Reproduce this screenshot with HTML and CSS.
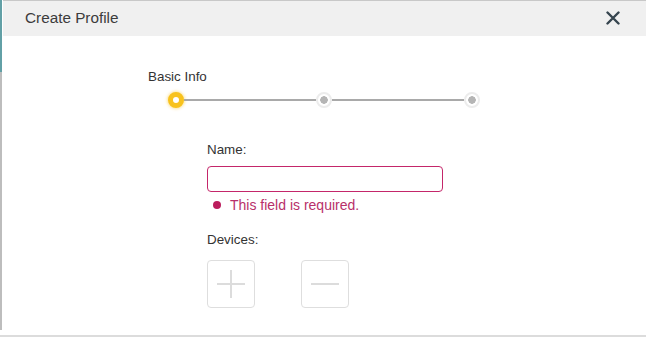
FILE: index.html
```html
<!DOCTYPE html>
<html>
<head>
<meta charset="utf-8">
<link rel="stylesheet" href="styles.css">
</head>
<body>
<div class="page">
  <div class="row">
    <div class="side"></div>
    <div class="modal">
      <div class="header">
        <span class="title">Create Profile</span>
        <svg class="close" width="14" height="14" viewBox="0 0 14 14"><path d="M1.5 1.5 L12.5 12.5 M12.5 1.5 L1.5 12.5" stroke="#36454f" stroke-width="2.4" stroke-linecap="round"/></svg>
      </div>
      <div class="body">
        <div class="step-label">Basic Info</div>
        <div class="stepper">
          <span class="dot active"></span>
          <span class="line"></span>
          <span class="dot"></span>
          <span class="line"></span>
          <span class="dot"></span>
        </div>
        <div class="form">
          <div class="label">Name:</div>
          <input class="input" type="text">
          <div class="error"><span class="err-dot"></span>This field is required.</div>
          <div class="label devices">Devices:</div>
          <div class="buttons">
            <div class="btn">
              <svg width="30" height="30" viewBox="0 0 30 30"><path d="M15 1 V29 M1 15 H29" stroke="#dcdcdc" stroke-width="2"/></svg>
            </div>
            <div class="btn">
              <svg width="30" height="30" viewBox="0 0 30 30"><path d="M1 15 H29" stroke="#dcdcdc" stroke-width="2"/></svg>
            </div>
          </div>
        </div>
      </div>
    </div>
  </div>
  <div class="bottom-line"></div>
</div>
</body>
</html>
```
FILE: styles.css
```css
html, body {
  margin: 0;
  padding: 0;
  background: #fff;
}
body {
  font-family: "Liberation Sans", Arial, sans-serif;
  color: #333;
}
.page {
  width: 646px;
  height: 338px;
  display: flex;
  flex-direction: column;
}
.row {
  flex: 1;
  display: flex;
  min-height: 0;
}
.side {
  width: 2px;
  margin-right: 1px;
  background: linear-gradient(#62a0a6 0, #62a0a6 72px, #bdbdbd 72px, #bdbdbd 330px, #fff 330px);
}
.modal {
  flex: 1;
  border-top: 1px solid #c8c8c8;
  display: flex;
  flex-direction: column;
}
.header {
  height: 35px;
  background: #f0f0f0;
  display: flex;
  align-items: center;
  justify-content: space-between;
  padding: 0 26px 0 22px;
}
.title {
  font-size: 15.3px;
  color: #3c3c3c;
  margin-top: -2px;
}
.close {
  margin-top: -2px;
}
.body {
  padding-top: 33px;
}
.step-label {
  font-size: 13.4px;
  padding-left: 145px;
  line-height: 16px;
  color: #333;
}
.stepper {
  display: flex;
  align-items: center;
  padding-left: 165px;
  margin-top: 7px;
}
.dot {
  width: 12px;
  height: 12px;
  border-radius: 50%;
  border: 2px solid #ececec;
  background: radial-gradient(circle, #b5b5b5 0, #b5b5b5 3.5px, #fff 4px);
}
.dot.active {
  width: 6px;
  height: 6px;
  border: 5px solid #f8c21c;
  background: #fff;
  box-shadow: 0 0 3px 1px rgba(248, 194, 28, 0.45);
}
.line {
  width: 132px;
  height: 2px;
  background: #a9a9a9;
}
.form {
  padding-left: 204px;
  margin-top: 34px;
}
.label {
  font-size: 13.4px;
  line-height: 16px;
  color: #333;
}
.input {
  display: block;
  box-sizing: border-box;
  width: 236px;
  height: 26px;
  margin: 8px 0 0;
  border: 1px solid #c4266a;
  border-radius: 4px;
  outline: none;
  padding: 0 6px;
  background: #fff;
}
.error {
  display: flex;
  align-items: center;
  font-size: 14px;
  color: #b8306a;
  margin-top: 5px;
  line-height: 16px;
  padding-left: 6px;
}
.err-dot {
  width: 8px;
  height: 8px;
  border-radius: 50%;
  background: #bb1d5d;
  margin-right: 9px;
}
.devices {
  margin-top: 19px;
}
.buttons {
  display: flex;
  gap: 46px;
  margin-top: 12px;
}
.btn {
  box-sizing: border-box;
  width: 48px;
  height: 48px;
  border: 1px solid #dedede;
  border-radius: 4px;
  display: flex;
  align-items: center;
  justify-content: center;
}
.bottom-line {
  height: 2px;
  background: #dcdcdc;
  margin-bottom: 1px;
}
```
